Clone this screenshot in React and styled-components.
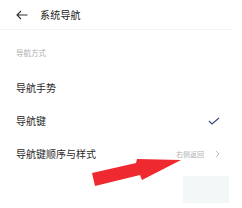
import React from "react";
import styled, { createGlobalStyle } from "styled-components";

const Global = createGlobalStyle`
  html, body { margin: 0; padding: 0; background: #fff; }
  body { font-family: "Noto Sans CJK SC", "Noto Sans", sans-serif; }
`;

const Screen = styled.div`
  position: relative;
  width: 242px;
  height: 208px;
  overflow: hidden;
  background: #fff;
`;

const Header = styled.div`
  display: flex;
  align-items: center;
  gap: 12px;
  height: 29px;
  padding-left: 16px;
  border-bottom: 1px solid #f4f4f4;
  margin-right: 9px;
`;

const Title = styled.div`
  font-size: 10px;
  line-height: 12px;
  color: #222;
  letter-spacing: 0.2px;
`;

const SectionLabel = styled.div`
  font-size: 7.5px;
  line-height: 8px;
  color: #aeaeae;
  padding: 19px 16px 14px;
`;

const Row = styled.div`
  display: flex;
  align-items: center;
  height: 33px;
  padding: 0 22px 0 16px;
`;

const RowText = styled.div`
  flex: 1;
  font-size: 10px;
  line-height: 12px;
  color: #2a2a2a;
`;

const Value = styled.div`
  display: flex;
  align-items: center;
  gap: 11px;
  font-size: 7px;
  line-height: 8px;
  color: #b0b0b0;
`;

const Overlay = styled.svg`
  position: absolute;
  left: 0;
  top: 0;
  pointer-events: none;
`;

const Watermark = styled.div`
  position: absolute;
  left: 183px;
  top: 176px;
  width: 46px;
  height: 27px;
  background: #eef3f4;
  opacity: 0.7;
`;

export default function App() {
  return (
    <Screen>
      <Global />
      <Header>
        <svg width="12" height="10" viewBox="0 0 12 10">
          <path d="M11.5 5 H1 M5 1 L1 5 L5 9" fill="none" stroke="#333" strokeWidth="1.1" />
        </svg>
        <Title>系统导航</Title>
      </Header>
      <SectionLabel>导航方式</SectionLabel>
      <Row>
        <RowText>导航手势</RowText>
      </Row>
      <Row>
        <RowText>导航键</RowText>
        <svg width="12" height="8" viewBox="0 0 12 8">
          <path d="M1 4 L4 7 L11 1" fill="none" stroke="#3b4a80" strokeWidth="1.2" />
        </svg>
      </Row>
      <Row>
        <RowText>导航键顺序与样式</RowText>
        <Value>
          右侧返回
          <svg width="5" height="8" viewBox="0 0 5 8">
            <path d="M0.8 0.8 L4 4 L0.8 7.2" fill="none" stroke="#bdbdbd" strokeWidth="1" />
          </svg>
        </Value>
      </Row>
      <Watermark />
      <Overlay width="242" height="208" viewBox="0 0 242 208">
        <polygon
          points="92,173 136,163 137,159 181,160 142,180 140,175 95,186"
          fill="#ee2a30"
        />
      </Overlay>
    </Screen>
  );
}
